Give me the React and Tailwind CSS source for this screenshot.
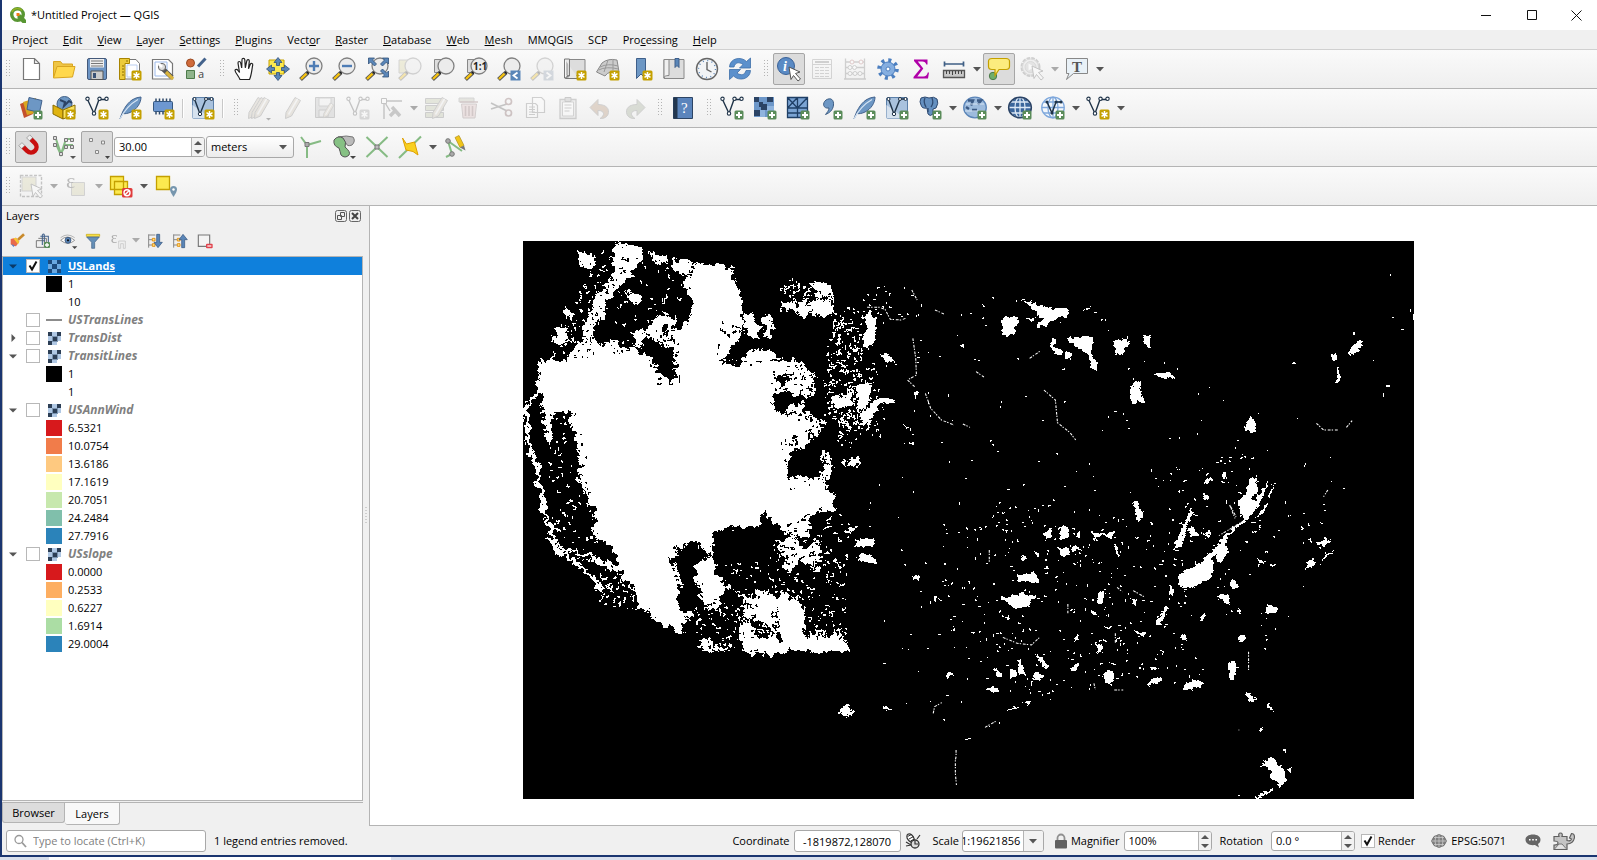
import React from "react";

/* ---------- map raster ---------- */

function makeRandom(seed) {
  let s = seed;
  return () => {
    s = (s * 1664525 + 1013904223) % 4294967296;
    return s / 4294967296;
  };
}

function inside(poly, x, y) {
  let hit = false;
  for (let i = 0, j = poly.length - 1; i < poly.length; j = i++) {
    const [xi, yi] = poly[i];
    const [xj, yj] = poly[j];
    if (yi > y !== yj > y && x < ((xj - xi) * (y - yi)) / (yj - yi) + xi) hit = !hit;
  }
  return hit;
}

/* Short random walks inside a polygon, one square map pixel per step. */
function speckle(seed, text, walks, steps) {
  const poly = text.split(" ").map((p) => p.split(",").map(Number));
  const xs = poly.map((p) => p[0]);
  const ys = poly.map((p) => p[1]);
  const x0 = Math.min(...xs);
  const y0 = Math.min(...ys);
  const w = Math.max(...xs) - x0;
  const h = Math.max(...ys) - y0;
  const rnd = makeRandom(seed);
  let d = "";
  for (let i = 0; i < walks; i++) {
    let x = Math.floor(x0 + rnd() * w);
    let y = Math.floor(y0 + rnd() * h);
    const n = 1 + Math.floor(rnd() * steps);
    for (let k = 0; k < n; k++) {
      if (inside(poly, x, y)) d += `M${x} ${y}h1v1h-1z`;
      if (rnd() < 0.5) x += rnd() < 0.5 ? 1 : -1;
      else y += rnd() < 0.5 ? 1 : -1;
    }
  }
  return d;
}

const WEST_WHITE = [
  "M313 37L400 58L396 90L372 122L350 158L330 165L320 190L295 205L285 235L280 270L255 290L250 320L215 335L228 280L245 235L255 190L285 175L298 150L312 110L308 70z",
  "M215 335L250 322L300 328L345 345L388 358L400 375L430 388L450 430L490 456L497 430L488 380L490 350L500 330L510 295L538 280L550 240L545 210L525 185L522 160L545 130L553 95L600 103L665 113L672 150L690 185L695 240L700 300L690 328L665 350L650 375L660 402L685 405L710 365L750 357L795 365L808 388L850 392L885 405L912 440L918 480L890 505L850 500L845 480L808 485L790 490L792 535L820 548L845 522L872 520L900 560L940 572L945 592L915 625L870 655L840 680L830 745L880 735L905 742L935 740L945 700L935 660L965 680L968 710L958 750L945 775L970 792L977 835L945 845L900 862L897 915L868 930L820 905L760 850L740 892L700 890L660 892L620 905L605 925L607 980L580 970L570 933L530 935L518 965L500 942L493 965L512 985L480 985L500 1020L520 1060L500 1090L510 1140L550 1150L540 1170L515 1185L515 1213L480 1197L420 1160L420 1145L385 1137L380 1095L345 1050L320 1020L270 1000L200 985L245 990L325 1010L320 970L290 940L248 920L255 880L250 840L225 780L205 760L210 720L200 650L190 600L180 570L190 545L130 545L125 590L125 640L110 640L105 600L95 500L90 400L95 385L160 390L175 370L200 345z",
  "M200 62L235 68L255 88L255 105L230 118L212 108z",
  "M140 290L170 288L175 315L150 348L132 335z",
  "M160 245L188 238L185 262L165 262z",
  "M345 330L375 305L410 300L430 270L462 248L478 262L500 285L505 320L490 350L430 348L410 350L380 345z",
  "M345 185L390 200L388 222L365 215z",
  "M420 70L480 78L470 100L430 95z",
  "M485 88L550 92L540 135L500 130L487 112z",
  "M500 205L520 200L518 218z",
  "M700 262L725 255L750 300L742 330L705 300z",
  "M750 258L785 262L790 295L775 330L760 325L765 290z",
  "M815 210L850 218L880 230L930 205L965 215L975 250L940 262L900 245L880 268L850 235L815 232z",
  "M900 160L962 163L962 200L925 200z",
  "M820 395L870 398L875 420L835 425z",
  "M965 500L1000 500L1020 475L1030 520L1000 535L965 532z",
  "M1042 465L1080 460L1080 520L1050 540L1080 560L1078 580L1055 560L1042 520z",
  "M1065 250L1085 245L1085 345L1058 345L1070 300z",
  "M990 690L1012 692L1010 708z",
  "M1022 685L1050 685L1048 710L1020 708z",
  "M560 1000L610 978L622 1040L680 1085L728 1102L738 1078L770 1090L800 1104L830 1090L878 1130L885 1170L880 1225L920 1200L965 1195L990 1190L1008 1240L1025 1268L860 1262L740 1275L700 1262L690 1220L700 1160L700 1100L640 1078L632 1130L600 1140L570 1100L555 1050z",
  "M790 930L850 925L890 960L930 930L925 1030L900 1010L870 985L830 1030L820 980z",
  "M1005 900L1040 890L1015 915z",
  "M1030 925L1082 935L1082 952L1050 950z",
  "M1045 970L1082 975L1082 990L1048 992z",
  "M1008 1416L1028 1442L1012 1464L990 1450L978 1445L1000 1438z",
  "M570 1240L600 1230L660 1260L620 1268L580 1262z",
];

const WEST_BLACK = [
  "M390 325L430 330L470 345L486 390L480 435L452 430L440 390L405 370z",
  "M455 285L482 290L470 315L455 305z",
  "M350 318L375 315L375 335L355 335z",
  "M250 282L300 290L325 325L270 345L255 320z",
  "M655 400L650 370L690 335L700 375L672 400z",
  "M805 440L830 435L830 465L810 470z",
  "M840 690L875 665L890 640L905 670L890 700L845 705z",
  "M640 1080L665 1078L698 1100L698 1160L670 1165L635 1150z",
  "M720 1165L750 1170L790 1210L780 1230L740 1220z",
  "M798 1110L804 1180L815 1235L802 1235L795 1180z",
  "M885 1165L940 1130L1000 1190L960 1215L890 1190z",
  "M525 1000L540 1010L580 1120L600 1170L560 1160L530 1090z",
  "M270 1080L300 1040L340 1050L380 1110L380 1135L280 1120z",
];

const COAST =
  "M85 440L95 485L62 510L45 540L55 590L50 630L68 680L85 722L85 770L102 800L98 840L118 880L130 930L134 960L190 990L240 1035L275 1075L276 1120";

const EAST_TOP = [
  "M455 207L470 210L495 225L545 238L555 232L583 236L578 258L530 275L525 292L498 292L500 278L515 262L495 258L485 240z",
  "M462 264L490 262L482 276z",
  "M398 260L435 258L447 272L435 292L430 314L398 314z",
  "M616 246L645 226L640 236z",
  "M580 326L610 320L650 317L650 365L665 418L652 420L634 370L600 345z",
  "M532 350L540 325L547 330L542 350L568 360L562 377L545 372z",
  "M577 370L593 370L592 386L578 386z",
  "M562 424L578 408L578 420z",
  "M710 335L738 328L755 312L742 335L760 338L742 350L735 375L718 374z",
  "M793 316L815 318L812 340L818 355L803 354L797 336z",
  "M820 432L855 428L865 420L884 445L850 445z",
  "M768 460L792 457L785 480L797 515L778 515L762 524L755 478z",
  "M1078 602L1080 578L1098 560L1110 580L1108 604z",
  "M1370 376L1372 350L1395 335L1413 332L1395 365z",
  "M1320 368L1332 372L1335 397L1325 390z",
  "M1336 412L1346 440L1344 458L1333 458z",
  "M1205 405L1218 390L1220 400z",
  "M282 345L292 342L292 356z",
  "M150 492L160 482L167 492L156 502z",
  "M58 370L80 373L95 398L68 390z",
  "M10 260L20 250L45 262L45 310L32 345L8 346L22 320L20 280z",
  "M0 465L22 462L24 512L0 520z",
  "M35 520L65 500L102 512L100 518L55 522L38 555L10 587L0 560z",
  "M338 222L348 224L345 230z",
  "M960 762L978 738L990 755z",
  "M1012 728L1028 730L1018 748z",
  "M956 800L966 792L980 805L960 811z",
  "M1058 815L1080 792L1090 745L1112 745L1115 775L1100 800L1108 840L1085 870L1070 865z",
  "M1105 820L1145 745L1130 795L1112 835z",
  "M1140 800L1163 755L1150 800z",
  "M1105 865L1142 818L1130 850z",
  "M765 815L776 812L792 865L778 870z",
  "M918 860L930 832L934 848z",
  "M1242 708L1252 697L1248 708z",
  "M115 580L145 600L130 596z",
  "M140 634L152 638L142 645z",
];

const EAST_BOTTOM = [
  "M1058 0L1110 0L1105 40L1075 70L1040 95L1028 120L1025 140L1034 158L1010 185L995 182L1005 160L985 175L990 200L978 238L930 262L905 268L890 250L895 220L918 205L945 195L975 165L1000 140L1010 115L1060 70L1085 45L1075 15z",
  "M880 150L888 110L910 70L927 20L934 38L915 80L903 135z",
  "M918 85L930 80L950 100L945 112L925 112z",
  "M963 105L990 80L975 108z",
  "M1110 50L1145 8L1130 38z",
  "M768 4L776 4L790 40L780 68z",
  "M512 100L535 84L538 102L522 122z",
  "M563 80L580 82L585 112L560 118z",
  "M555 145L580 140L588 165L572 176z",
  "M592 140L605 136L618 150L598 152z",
  "M596 105L612 110L618 96z",
  "M648 88L660 100L690 98L715 92L705 118L685 105L655 122z",
  "M712 132L722 140L728 180L720 170z",
  "M0 115L38 114L40 138L5 136z",
  "M0 160L22 170L46 178L44 188L0 184z",
  "M147 228L165 226L170 236L158 243z",
  "M205 290L228 298L208 304z",
  "M432 228L470 222L488 215L500 245L445 244z",
  "M392 290L440 285L455 275L470 285L498 285L480 298L475 320L425 320L410 305z",
  "M447 168L465 165L468 178L450 180z",
  "M482 152L502 160L500 172z",
  "M512 205L522 198L530 212z",
  "M400 350L420 352L412 362z",
  "M665 308L668 282L685 268L680 308z",
  "M642 325L665 345L650 346z",
  "M756 298L778 296L775 323z",
  "M830 374L850 325L862 322L855 345L842 374z",
  "M1140 312L1172 328L1150 345L1135 335z",
  "M1005 285L1030 283L1035 314L1018 310z",
  "M1036 250L1045 238L1060 255L1048 266z",
  "M1050 332L1064 328L1064 342z",
  "M1112 172L1130 190L1116 192z",
  "M1148 190L1170 192L1158 202z",
  "M1252 184L1270 176L1280 188L1265 202L1245 212z",
  "M1275 128L1300 122L1305 108L1315 125L1300 142z",
  "M1290 176L1330 145L1300 178z",
  "M1056 410L1083 408L1078 424L1060 422z",
  "M896 412L908 402L916 412L905 422z",
  "M763 388L798 400L795 412z",
  "M658 432L672 428L685 450L668 460z",
  "M598 412L615 402L608 428z",
  "M488 462L508 470L528 500L518 506z",
  "M440 480L450 478L462 526L445 525z",
  "M375 505L398 520L395 536L380 530z",
  "M420 512L432 508L442 532L422 536z",
  "M484 540L492 510L520 530L500 540z",
  "M584 515L610 482L615 490L600 516z",
  "M680 525L700 512L712 520L705 555L690 548z",
  "M697 488L718 490L712 500z",
  "M805 558L815 538L848 528L850 540L825 550z",
  "M815 502L836 500L820 514z",
  "M905 570L910 550L938 538L965 552L940 565z",
  "M1033 490L1054 484L1050 536L1033 536z",
  "M354 572L368 557L390 565L388 580z",
  "M244 530L250 512L265 528z",
  "M1078 575L1092 580L1108 602L1088 606z",
  "M1137 606L1155 625L1152 636z",
  "M1120 688L1132 684L1126 696z",
  "M1182 742L1194 750L1190 762z",
  "M1126 796L1135 778L1160 773L1168 795L1185 802L1196 835L1176 860L1152 836L1150 812z",
  "M1198 812L1205 800L1210 822z",
  "M1105 890L1130 880L1158 864L1155 874L1112 897z",
  "M1062 890L1072 884L1066 896z",
  "M410 630L445 618L430 630z",
  "M450 608L480 604L475 612z",
  "M290 716L318 712L300 722z",
  "M253 388L268 380L265 390z",
  "M60 618L90 630L72 632z",
  "M950 352L970 340L958 362z",
  "M685 375L705 380L690 385z",
  "M866 285L870 250L880 270L875 288z",
  "M808 62L820 62L820 72z",
];

const THIN_TOP =
  "M20 232h35l15 6l15 30l30 2l15 -6M148 325l8 60l2 50l-25 15l20 20M183 490l15 45l30 35l35 15M288 582l20 10M515 480l32 30l6 68l35 30l16 22M325 425l22 16M1035 825l15 40M1278 580l20 20l40 0M1310 780l-12 20M1362 592l16 -20M475 385l30 -22M145 180l15 30M210 240l25 12";
const THIN_BOTTOM =
  "M269 750v20l-2 10v40l3 35M400 412l40 18l40 5l25 -25M720 262l15 14M765 272l30 18M1088 455v60M582 312v30M205 640l4 -20l20 -12M362 150v35M655 550l4 20M712 570h25M715 400v30M1060 690h2M350 682l30 -18M1075 62l-70 45M1038 20l15 30";

function RasterMap() {
  const landEast =
    "865,290 960,290 1080,300 1230,400 1330,420 1350,500 1310,600 1250,690 1120,700 1020,700 960,770 940,720 880,690 850,600 840,400";
  const whites = [
    speckle(11, "856,296 870,330 885,420 850,440 815,420 820,390 835,350 830,320", 240, 9),
    speckle(12, "830,310 862,335 862,425 835,430 822,390", 210, 8),
    speckle(13, "590,250 675,250 680,320 600,340 560,330", 90, 10),
    speckle(14, "780,275 832,285 835,310 780,312", 110, 9),
    speckle(15, "770,535 850,510 845,600 770,600", 190, 9),
    speckle(27, "690,605 845,605 850,651 700,651", 230, 9),
    speckle(28, "725,565 770,555 775,600 740,598", 50, 8),
    speckle(16, "545,415 575,415 595,510 600,560 552,530", 130, 9),
    speckle(17, "565,300 600,270 585,355 548,360", 120, 9),
    speckle(19, landEast, 330, 3),
    speckle(20, "960,510 1060,495 1180,550 1200,680 1030,700 960,680 940,570", 330, 4),
    speckle(21, "1160,470 1270,440 1270,560 1200,600 1150,560", 100, 5),
    speckle(22, "1300,510 1335,530 1320,565 1300,540", 28, 5),
    speckle(23, "825,410 870,415 885,440 840,450", 50, 8),
    speckle(25, "600,560 640,580 640,610 600,605", 90, 8),
    speckle(26, "865,285 940,288 935,320 870,320", 24, 4),
  ];
  const blacks = [
    speckle(31, "780,440 832,420 835,480 790,490", 130, 10),
    speckle(32, "640,330 680,330 680,385 655,385", 90, 10),
    speckle(33, "770,355 815,360 822,430 770,410", 120, 10),
    speckle(34, "695,600 760,595 760,652 700,652", 110, 9),
    speckle(42, "800,590 845,590 850,640 805,640", 130, 9),
    speckle(35, "670,560 700,540 705,640 690,640", 100, 10),
    speckle(36, "720,320 775,340 770,370 715,370", 70, 10),
    speckle(37, "775,530 835,500 840,590 770,590", 200, 9),
    speckle(38, "545,345 615,320 640,350 560,362", 80, 8),
    speckle(39, "600,240 700,258 690,290 610,280", 80, 9),
    speckle(40, "565,430 582,430 598,530 575,520", 60, 6),
    speckle(41, "590,260 610,260 625,350 590,345", 90, 8),
  ];
  return (
    <svg
      viewBox="523 241 891 558"
      className="block h-[558px] w-[891px] shrink-0 bg-black"
      role="img"
      aria-label="USLands raster"
      shapeRendering="crispEdges"
    >
      <defs>
        <filter id="ragged" x="0" y="0" width="100%" height="100%" colorInterpolationFilters="sRGB">
          <feTurbulence type="fractalNoise" baseFrequency="0.16" numOctaves="4" seed="7" />
          <feDisplacementMap in="SourceGraphic" scale="13" xChannelSelector="R" yChannelSelector="G" result="moved" />
          <feComponentTransfer in="moved">
            <feFuncR type="discrete" tableValues="0 1" />
            <feFuncG type="discrete" tableValues="0 1" />
            <feFuncB type="discrete" tableValues="0 1" />
          </feComponentTransfer>
        </filter>
        <filter id="jagged" x="0" y="0" width="100%" height="100%" colorInterpolationFilters="sRGB">
          <feTurbulence type="fractalNoise" baseFrequency="0.2" numOctaves="3" seed="3" />
          <feDisplacementMap in="SourceGraphic" scale="6" xChannelSelector="R" yChannelSelector="G" />
        </filter>
      </defs>
      <rect x="523" y="241" width="891" height="558" fill="#000" />
      <g filter="url(#ragged)">
        <rect x="523" y="241" width="891" height="558" fill="#000" />
        <g transform="translate(510 230) scale(.33333)">
          <path d={WEST_WHITE.join("")} fill="#fff" />
          <path d={COAST} fill="none" stroke="#fff" strokeWidth="13" />
          <path d="M140 950L200 968L260 985L330 1020L380 1080" fill="none" stroke="#fff" strokeWidth="10" />
          <path d={WEST_BLACK.join("")} fill="#000" />
        </g>
      </g>
      <g filter="url(#jagged)">
        <g fill="#fff" transform="translate(860 230) scale(.35714 .33333)">
          <path d={EAST_TOP.join("")} />
        </g>
        <g fill="#fff" transform="translate(860 500) scale(.35714 .33333)">
          <path d={EAST_BOTTOM.join("")} />
        </g>
      </g>
      <g fill="none" stroke="#fff" strokeWidth="3" strokeDasharray="8 3 4 5">
        <path transform="translate(860 230) scale(.35714 .33333)" d={THIN_TOP} />
        <path transform="translate(860 500) scale(.35714 .33333)" d={THIN_BOTTOM} />
      </g>
      <path d={whites.join("")} fill="#fff" />
      <path d={blacks.join("")} fill="#000" />
      <path fill="#fff" d="M1390 274h1v2h-1zM1410 309h1v3h-1zM1413 314h1v6h-1zM1392 317h2v1h-2zM1401 329h3v1h-3zM1353 332h2v3h-2zM1386 385h4v2h-4zM1383 393h1v4h-1zM1373 360h1v1h-1z" />
    </svg>
  );
}

/* ---------- icon parts ---------- */

function Icon({ children, size = "size-6", box = "0 0 24 24" }) {
  return (
    <svg viewBox={box} className={`${size} block shrink-0 overflow-visible`} fill="none" aria-hidden="true">
      {children}
    </svg>
  );
}

const Star = ({ fill = "#c4a000" }) => (
  <g>
    <rect x="13.5" y="13.5" width="10" height="10" rx="1.5" fill={fill} />
    <path d="M18.5 15v7M15.5 16.7l6 3.6M21.500 16.700l-6 3.600" stroke="#fff" strokeWidth="1.500" />
    <circle cx="18.5" cy="18.5" r="1.800" fill="#fff" />
  </g>
);
const Plus = () => (
  <g>
    <rect x="14.500" y="14.500" width="9" height="9" rx="1.500" fill="#5a8c5a" />
    <path d="M19 16v6M16 19h6" stroke="#fff" strokeWidth="2" />
  </g>
);
const Nodes = ({ c = "#1f3348" }) => (
  <g stroke={c} strokeWidth="1.400">
    <path d="M2.500 3.500l6.500 14l5 -14h7" />
    <g fill="#fff" strokeWidth="1.100">
      <circle cx="2.500" cy="2.800" r="1.700" />
      <circle cx="9" cy="17.500" r="1.700" />
      <circle cx="14.500" cy="2.800" r="1.700" />
      <circle cx="21.500" cy="2.800" r="1.700" />
    </g>
  </g>
);
const Lens = ({ children }) => (
  <g>
    <path d="M9 15.500L1.500 22.500" stroke="#555" strokeWidth="4" />
    <path d="M7.500 16.700L2 22" stroke="#f5c211" strokeWidth="2.400" />
    <path d="M8.500 16l2.500 -2.500" stroke="#111" strokeWidth="2.500" />
    <circle cx="15" cy="9" r="8" fill="#ececec" stroke="#808080" strokeWidth="1.300" />
    {children}
  </g>
);
const Faded = ({ children }) => <g opacity=".3">{children}</g>;
const Quill = () => (
  <g>
    <path d="M2 23C4 16 8 8 14 4c4 -2.500 6 -2.500 9 -3c0 6 -4 12 -10 15c-3 1.500 -6 2 -8 1.500z" fill="#6d97c4" stroke="#41618c" />
    <path d="M2 23C6 15 12 8 20 3.500" stroke="#d5e4f4" strokeWidth="1.200" />
  </g>
);
const Page = () => <path d="M4.500 1.500h11l5 5v16h-16zM15.500 1.500v5h5" fill="#fff" stroke="#777" strokeWidth="1.200" />;
const Globe = ({ c, bg }) => (
  <g stroke={c} strokeWidth="1.300">
    <ellipse cx="12" cy="11.500" rx="11.300" ry="10.300" fill={bg} />
    <ellipse cx="12" cy="11.500" rx="5" ry="10.300" />
    <path d="M1 11.500h22M3 6h18M3 17h18M12 1v21" />
  </g>
);
const Pencil = ({ x = 0 }) => (
  <g transform={`translate(${x} 0)`}>
    <path d="M13 1.500l5.500 3L9.500 20L3.500 22.500L4 16.500z" fill="#c9bfae" stroke="#777" />
    <path d="M15.500 3L6.500 18.500" stroke="#eee" strokeWidth="1.500" />
  </g>
);
const Checker = () => (
  <g shapeRendering="crispEdges">
    <path d="M1 1h20v20h-20z" fill="#6d97c9" />
    <path d="M1 1h5v5h-5zM14 1h6v5h-6zM6 6h4v5h-4zM8 8h6v6h-6zM1 14h6v6h-6z" fill="#2b4365" />
    <path d="M14 10h7v5h-7zM7 14h5v7h-5z" fill="#8fb4de" />
  </g>
);
const Meshed = () => (
  <path d="M1.500 1.500h20v20h-20zM1.500 12h20M11.500 1.500v20M1.500 1.500l10 10.500M11.500 1.500l-10 10.500M21.500 1.500l-10 10.500M1.500 17h20" fill="#7ba4d4" stroke="#1f3f66" strokeWidth="1.300" />
);
const VSquare = () => (
  <g>
    <rect x="1.500" y="1.500" width="21" height="21" rx="1.500" fill="#a9c2de" stroke="#5b7fa8" />
    <path d="M1.500 22.500V9L20 22.500z" fill="#d6e2ef" />
    <path d="M3.500 3l5.500 15l6 -15h6" stroke="#1f3348" strokeWidth="1.400" />
    <g fill="#fff" stroke="#1f3348"><circle cx="3.500" cy="3" r="1.500" /><circle cx="9" cy="18" r="1.700" /><circle cx="15" cy="3" r="1.500" /><circle cx="20.500" cy="3" r="1.500" /></g>
  </g>
);
const Pointer = ({ x = 0, y = 0 }) => (
  <path transform={`translate(${x} ${y})`} d="M11 9l11 5l-4.500 1.500l5 5.500l-2.500 2l-4.500 -5.500l-2.500 4z" fill="#fff" stroke="#555" />
);

const I = {
  new: <Page />,
  open: (
    <g stroke="#d9a520">
      <path d="M1.500 20.500V4.500h7l2 2.500h10v4" fill="#eec545" />
      <path d="M1.500 21L5 9.500h18L20.500 20z" fill="#ffd84d" />
    </g>
  ),
  save: (
    <g>
      <path d="M2.500 3q0 -1.500 1.500 -1.500h16q1.500 0 1.500 1.500v18q0 1.500 -1.500 1.500h-16q-1.500 0 -1.500 -1.500z" fill="#6c94c4" stroke="#44597a" />
      <path d="M5 2h14v8.500h-14z" fill="#eee" />
      <path d="M6 4h12M6 6.500h12M6 9h12" stroke="#777" />
      <path d="M6 14h12v8.500h-12z" fill="#ccc" stroke="#555" /><path d="M8 16h3v5h-3z" fill="#3b5376" />
    </g>
  ),
  layout: (
    <g>
      <path d="M2 2.500h16l3.500 4v15.500h-19.500z" fill="#fff" stroke="#777" />
      <path d="M9 8h10v12h-10z" stroke="#b9cdf0" />
      <path d="M1.500 1.500h10v5h-4.500v16h-5.500z" fill="#eccb3a" stroke="#a88400" />
      <path d="M4 9h2M4 12h2M4 15h2M4 18h2M9 3v2" stroke="#8a6d00" />
      <Star />
    </g>
  ),
  layoutManager: (
    <g>
      <path d="M1.500 2.500h16l4 4v15.500h-20z" fill="#fff" stroke="#777" strokeWidth="1.200" />
      <path d="M4 5h12v14h-12z" stroke="#9cb9ea" />
      <path d="M12 12l9 8.500" stroke="#555" strokeWidth="4.500" /><path d="M15 15l7 7" stroke="#d9b43c" strokeWidth="3.200" />
      <circle cx="11" cy="10" r="3.600" fill="#ddd" stroke="#666" /><path d="M8 7l3 3" stroke="#fff" strokeWidth="2.500" />
    </g>
  ),
  style: (
    <g>
      <circle cx="6.500" cy="6" r="4" fill="#d06a3a" stroke="#9a4a22" />
      <path d="M14 9.500l7.500 -8" stroke="#44638c" strokeWidth="3" />
      <path d="M2.500 13.500h8v8h-8z" fill="#8fb48b" stroke="#4d7a4a" />
      <text x="14" y="21" fontSize="11" fill="#444" fontFamily="Open Sans">a</text>
    </g>
  ),
  hand: (
    <path d="M7 22.500c-1 -3 -4.500 -6.500 -5 -9c0 -1.500 2.200 -1.500 3 0l1.500 2L5 6c0 -2 2.300 -2 2.700 0l1 5L9 2.800c0 -2 2.700 -2 2.800 0l.5 8l1.500 -7c.5 -1.800 2.700 -1.300 2.500 .5l-.8 7.500l1.800 -4.500c.8 -1.500 2.800 -.8 2.400 .9c-1 5 -1.200 10 -3.200 14.300z" fill="#fff" stroke="#222" strokeWidth="1.200" />
  ),
  panSel: (
    <g>
      <path d="M3 3h15v14h-15z" fill="#fce94f" stroke="#c4a000" />
      <path d="M12 .5l4 5h-2.500v3h-3v-3h-2.500zM23.500 12l-5 4v-2.500h-3v-3h3v-2.500zM12 23.500l-4 -5h2.500v-3h3v3h2.500zM.5 12l5 -4v2.500h3v3h-3v2.500z" fill="#5a86b8" stroke="#30507a" strokeWidth=".8" />
    </g>
  ),
  zoomIn: <Lens><path d="M15 4v10M10 9h10" stroke="#4f7db5" strokeWidth="2.400" /></Lens>,
  zoomOut: <Lens><path d="M10 9h10" stroke="#4f7db5" strokeWidth="2.400" /></Lens>,
  zoomFull: (
    <Lens>
      <path d="M3.500 1h6l-2 2l4 4l-2 2l-4 -4l-2 2zM23.500 1h-6l2 2l-4 4l2 2l4 -4l2 2zM23.500 20h-6l2 -2l-4 -4l2 -2l4 4l2 -2z" fill="#5a86b8" stroke="#30507a" strokeWidth=".8" />
    </Lens>
  ),
  zoomSel: <Faded><path d="M1 3h12v13h-12z" fill="#d8d39a" stroke="#888" /><Lens /></Faded>,
  zoomLayer: <g><path d="M3.500 2.500h9v13h-9z" fill="#ddd" stroke="#888" /><Lens /></g>,
  zoomNative: (
    <g><path d="M3.500 2.500h9v13h-9z" fill="#ddd" stroke="#888" /><Lens><text x="9" y="13" fontSize="10" fontWeight="700" fill="#222" fontFamily="Open Sans">1:1</text></Lens></g>
  ),
  zoomLast: <Lens><path d="M13.500 13.500h10v10h-10z" fill="#5a86b8" /><path d="M20.500 15.500l-4 3l4 3" stroke="#fff" strokeWidth="1.800" /></Lens>,
  zoomNext: <Faded><Lens><path d="M13.500 13.500h10v10h-10z" fill="#8a9aac" /><path d="M16.500 15.500l4 3l-4 3" stroke="#fff" strokeWidth="1.800" /></Lens></Faded>,
  mapView: <g><path d="M4 2.500h18v16h-18z" fill="#ddd" stroke="#888" /><path d="M1.500 2h5v17q-4 0 -4 2.500h13" fill="#e8e8e8" stroke="#777" /><path d="M1.500 2v19h4" stroke="#777" /><Star /></g>,
  map3d: <g><path d="M6 6q6 -5 15 -3l2 12q-10 -2 -14 4L.500 15z" fill="#ccc" stroke="#888" /><path d="M4 10q8 -4 18 -1M2.500 13q8 -4 20 -1M12 3l-4 12M17 2.500v11" stroke="#999" /><Star /></g>,
  bookmark: <g><path d="M7.500 1.500h9v20l-4.500 -4.500l-4.500 4.500z" fill="#6d97c4" stroke="#3e5f8a" /><Star /></g>,
  bookmarks: <g><path d="M2 2.500h20v19h-20z" fill="#ddd" stroke="#888" /><path d="M2 2.500h5v16q-5 0 -5 2.500z" fill="#f0f0f0" stroke="#888" /><path d="M13 1.500h4v9l-2 -2l-2 2z" fill="#5a86b8" stroke="#3e5f8a" /></g>,
  clock: (
    <g><circle cx="12" cy="12" r="10.500" fill="#f2f4f6" stroke="#666" strokeWidth="1.400" /><circle cx="12" cy="12" r="8.500" stroke="#5a86b8" strokeDasharray="1 3.450" strokeWidth="1.400" /><path d="M12 5v7.500l4.500 2.500" stroke="#666" strokeWidth="1.400" /></g>
  ),
  refresh: (
    <g fill="#5b90cc" stroke="#3e6fa8" strokeWidth=".8">
      <path d="M1.500 10C2 1 13 -1 18.500 4.500L22.500 1v10h-11l3.500 -3.500C11 4.500 7 5.500 6 10z" />
      <path d="M22.500 13.500C22 22.500 11 24.500 5.500 19L1.500 22.500v-10h11L9 16C13 19 17 18 18 13.500z" />
    </g>
  ),
  identify: <g><circle cx="9" cy="9" r="8.500" fill="#5a8ac4" stroke="#3a6298" /><text x="6" y="14" fontSize="14" fontStyle="italic" fontWeight="700" fill="#fff" fontFamily="Liberation Serif">i</text><Pointer x={1} y={1} /></g>,
  table: <Faded><path d="M2.500 2.500h19v19h-19zM2.500 7.500h19" stroke="#888" /><path d="M5 5h14" stroke="#777" strokeWidth="2" /><path d="M5 10.500h14M5 13.500h14M5 16.500h14M5 19.500h14" stroke="#888" strokeDasharray="4 1" /></Faded>,
  abacus: <Faded><path d="M2.500 1.500v20M21.500 1.500v20M1 22h22M2.500 5h19M2.500 10.500h19M2.500 16.500h19" stroke="#777" strokeWidth="1.300" /><g fill="#fff" stroke="#a66"><circle cx="9" cy="5" r="2" /><circle cx="18" cy="5" r="2" /></g><g fill="#fff" stroke="#777"><circle cx="7" cy="10.500" r="2" /><circle cx="11.500" cy="10.500" r="2" /><circle cx="7" cy="16.500" r="2" /><circle cx="12" cy="16.500" r="2" /><circle cx="17" cy="16.500" r="2" /></g></Faded>,
  gear: <g><circle cx="12" cy="12" r="8.800" stroke="#4c7fc0" strokeWidth="4" strokeDasharray="3 3.910" /><circle cx="12" cy="12" r="7" fill="#85aee0" stroke="#4c7fc0" /><circle cx="12" cy="12" r="2" fill="#fff" stroke="#4c7fc0" /></g>,
  sigma: <path d="M5 2.500h13.500v5h-1.200q-.8 -3 -4 -3h-4.500l5.500 7l-6 8h6q3.500 0 4.500 -4h1.200l-1 6h-14.500v-1.500l7 -8.500l-6.500 -7.500z" fill="#b000a8" />,
  measure: <g><path d="M2 7h20M2.500 4.500v5M21.500 4.500v5" stroke="#3f5f85" strokeWidth="1.700" /><path d="M1.500 13.500h21v7h-21z" fill="#c8c8c8" stroke="#555" strokeWidth="1.300" /><path d="M4.500 14v3M7.500 14v3M10.500 14v4M13.500 14v3M16.500 14v3M19.500 14v3" stroke="#444" /></g>,
  mapTips: <g><circle cx="6" cy="19" r="3.700" fill="#6fae6c" stroke="#4d7a4a" /><path d="M5 1.500h14q3.500 0 3.500 3v5q0 3 -3.500 3h-7l-4 6v-6h-3q-3.500 0 -3.500 -3v-5q0 -3 3.500 -3z" fill="#fcec7e" stroke="#c4a000" strokeWidth="1.200" /></g>,
  action: <Faded><circle cx="10.500" cy="10" r="8.500" stroke="#777" strokeWidth="3" strokeDasharray="3.500 1" /><circle cx="10.500" cy="10" r="8" fill="#ddd" stroke="#999" /><circle cx="10.500" cy="10" r="5.500" fill="#bbb" stroke="#999" /><path d="M8.500 6.500l6 3.500l-6 3.500z" fill="#fff" /><Pointer x={1} /></Faded>,
  annotation: <g><path d="M1.500 1.500h21v15h-14l-7 6l2.500 -6h-2.500z" fill="#e9f1f7" stroke="#888" /><text x="7" y="14.500" fontSize="15" fontWeight="700" fill="#555" fontFamily="Liberation Serif">T</text></g>,

  dataSource: <g><path d="M1 8l10 -4l3 14l-9 4z" fill="#c4502c" /><path d="M4 6l13 -4l2 14l-11 3z" fill="#d9a520" /><path d="M10 1.500l13 3l-2.500 12l-12.500 -3z" fill="#6d97c4" stroke="#41618c" /><Plus /></g>,
  geopackage: <g><circle cx="12.500" cy="8" r="7.500" fill="#6d97c4" stroke="#3f5f85" /><path d="M8 4l5 2l-1 4l5 -5l3 2" stroke="#2b4365" strokeWidth="2" /><path d="M1 9l10 5v9l-10 -5z" fill="#e0b410" stroke="#8a6d00" /><path d="M11 14l12 -5v9l-12 5z" fill="#fbe260" stroke="#8a6d00" /><Star /></g>,
  newShp: <g><Nodes /><Star /></g>,
  newQuill: <g><Quill /><Star /></g>,
  chip: <g><path d="M5 2.500v16M8.500 2.500v16M12 2.500v16M15.500 2.500v16M19 2.500v16" stroke="#2e4869" strokeWidth="1.500" /><rect x="2.500" y="5.500" width="19" height="10" rx="1" fill="#6d97d0" stroke="#34567f" /><Star /></g>,
  virtual: <g><VSquare /><Star /></g>,
  editsMulti: <Faded><Pencil x={-2} /><Pencil x={1} /><Pencil x={4} /><path d="M19 22h5l-2.500 2.500z" fill="#222" /></Faded>,
  pencil: <Faded><Pencil x={2} /></Faded>,
  saveEdits: <Faded><path d="M2.500 1.500h19v20h-19z" fill="#bbb" stroke="#777" /><path d="M6 2h12v8h-12z" fill="#eee" stroke="#888" /><path d="M6 14h9v7h-9z" fill="#ddd" stroke="#777" /><g transform="translate(8 6) scale(.7)"><Pencil /></g></Faded>,
  addFeature: <Faded><Nodes c="#555" /><Star fill="#999" /></Faded>,
  vertex: <Faded><path d="M5 23V5h18M5 5l6 10" stroke="#555" strokeWidth="1.400" /><path d="M2.500 2.500h5v5h-5z" fill="#fff" stroke="#555" /><path d="M11 20l6 -6M13 11l8 9" stroke="#666" strokeWidth="3.500" /></Faded>,
  modify: <Faded><path d="M1.500 2.500h18v5h-18zM1.500 9.500h18v5h-18zM1.500 16.500h18v5h-18z" fill="#b9c0a0" stroke="#777" /><Pencil x={5} /></Faded>,
  trash: <Faded><path d="M2 2h15v4h-15z" fill="#bba" stroke="#888" /><path d="M4.500 8h15l-1.500 14h-12z" fill="#d8b8b8" stroke="#877" /><path d="M3 6h18M8.500 10v10M12 10v10M15.500 10v10" stroke="#866" strokeWidth="1.600" /></Faded>,
  cut: <Faded><path d="M1 7l16 8M1 13l16 -5" stroke="#555" strokeWidth="1.800" /><circle cx="18.500" cy="5.500" r="3" stroke="#755" strokeWidth="1.700" /><circle cx="18.500" cy="17" r="3" stroke="#755" strokeWidth="1.700" /></Faded>,
  copy: <Faded><path d="M9.500 1.500h9l3 3v12h-12zM3.500 7.500h9l2 2v12h-11z" fill="#fff" stroke="#777" strokeWidth="1.200" /><path d="M6 11h6M6 13.500h6M6 16h6M6 18.500h6" stroke="#777" /></Faded>,
  paste: <Faded><path d="M4 3.500h16v19h-16z" fill="#ddd" stroke="#777" strokeWidth="1.300" /><path d="M6.500 6h11v14h-11z" fill="#fff" stroke="#888" /><path d="M9 1.500h6v4h-6z" fill="#aaa" stroke="#666" /><path d="M8.500 9h7M8.500 12h7M8.500 15h5" stroke="#777" /></Faded>,
  undo: <Faded><path d="M9 3.500v5c8 0 12 4 10 10c-2 4 -6 4 -8 4c5 -3 5 -8 -2 -8v5l-8 -8z" fill="#b08a6a" stroke="#777" /></Faded>,
  redo: <Faded><path d="M15 3.500v5c-8 0 -12 4 -10 10c2 4 6 4 8 4c-5 -3 -5 -8 2 -8v5l8 -8z" fill="#9aa58c" stroke="#777" /></Faded>,
  help: <g><path d="M2.500 1.500h19v21h-19z" fill="#5a84bc" stroke="#2c4464" /><path d="M2.500 1.500h4v21h-4z" fill="#22364f" /><text x="10" y="17" fontSize="15" fill="#fff" fontFamily="Liberation Serif">?</text></g>,
  addVector: <g><Nodes /><Plus /></g>,
  addRaster: <g><Checker /><Plus /></g>,
  addMesh: <g><Meshed /><Plus /></g>,
  addCsv: <g><path d="M7 4c5 -3 8 0 7.500 5c-.5 5 -4 8 -8 9.500c1.500 -2 3.500 -4 3.500 -6.500c-6 1 -7 -5 -3 -8z" fill="#6d97c4" stroke="#3f5f85" /><Plus /></g>,
  addQuill: <g><Quill /><Plus /></g>,
  addVirtual: <g><VSquare /><Plus /></g>,
  addPg: <g><path d="M3 2q4 -2 8 0q5 -2 8 1q2 4 -1 9l-3 1v5q-3 3 -5 0l-1 -6q-5 1 -6 -3q-2 -3 0 -7z" fill="#6590c0" stroke="#2f4a70" /><path d="M7 2q-2 4 1 9M14 2q2 5 -1 9M10 12v4" stroke="#2f4a70" strokeWidth="1.300" /><Plus /></g>,
  addWms: <g><ellipse cx="12" cy="11.500" rx="11.300" ry="10.300" fill="#9dbbdd" stroke="#5b85b8" strokeWidth="1.300" /><path d="M5 4.500h5l-2 5M14 4.500h4l-3 4M9 14h5M3 11l3 2" stroke="#3b5a85" strokeWidth="2.500" /><path d="M3 8h18M2 15h20" stroke="#d5e4f4" /><Plus /></g>,
  addWcs: <g><Globe c="#dce8f5" bg="#3b669c" /><ellipse cx="12" cy="11.500" rx="11.300" ry="10.300" stroke="#2b4365" strokeWidth="1.600" /><Plus /></g>,
  addWfs: <g><Globe c="#7fa8dc" bg="#f4f8fc" /><path d="M6 6l5 11l4 -11h5" stroke="#1f3348" strokeWidth="1.500" /><g fill="#1f3348"><circle cx="6" cy="6" r="1.500" /><circle cx="11" cy="17" r="1.500" /><circle cx="15" cy="6" r="1.500" /><circle cx="20" cy="6" r="1.500" /></g><Plus /></g>,

  magnet: <g transform="rotate(-45 12 12)"><path d="M6.500 6v6a5.500 5.500 0 0 0 11 0v-6" stroke="#c80f0f" strokeWidth="4.500" /><path d="M4.300 2.500h4.400v4h-4.400zM15.300 2.500h4.400v4h-4.400z" fill="#eee" stroke="#999" strokeWidth=".8" /></g>,
  snapAdv: <g><path d="M4 4l5 15l5 -15h7M4 9l5 11M9 18l5 -8h7" stroke="#86bb84" strokeWidth="2" /><g fill="#ddd" stroke="#777"><path d="M1.500 1.500h3v3h-3zM12.500 3.500h3v3h-3zM18.500 3.500h3v3h-3zM1.500 8.500h3v3h-3zM12.500 10.500h3v3h-3zM18.500 10.500h3v3h-3zM7.500 17.500h3v3h-3z" /></g><path d="M18 21h6l-3 3z" fill="#555" /></g>,
  snapType: <g><path d="M4.500 3.500h3v3h-3zM16.500 6h3v3h-3zM10.500 15.500h3v3h-3z" fill="#eee" stroke="#888" /><path d="M20 21h5l-2.500 3z" fill="#444" /></g>,
  topo: <g><path d="M2 2l6 8l14 -4M8 10v13" stroke="#86bb84" strokeWidth="2" /><path d="M6 7.500h4v4h-4z" fill="#aaa" stroke="#777" /></g>,
  overlap: <g><path d="M6 2q9 -2 15 0q3 4 -1 8q-5 2 -6 -2z" fill="#bbb" stroke="#777" /><path d="M2 5q4 -5 9 -2q4 4 2 9q6 5 4 8q-4 4 -8 0q-1 -4 -2 -7q-6 -2 -5 -8z" fill="#86c184" stroke="#555" /><path d="M18 21h6l-3 3z" fill="#444" /></g>,
  cross: <g><path d="M1.500 2l21 20M22.500 2l-21 20" stroke="#86bb84" strokeWidth="2" /><path d="M10 10h4v4h-4z" fill="#bbb" stroke="#777" /></g>,
  trace: <g><path d="M23 1.500L1 23" stroke="#86bb84" strokeWidth="2" /><path d="M4.500 3l4 6l8 -2l3.500 13l-5 -3.500l-7 -1.500z" fill="#f8d020" stroke="#e0a000" /></g>,
  selfSnap: <g><path d="M3 22l6 -3L5 6l14 10" stroke="#86bb84" strokeWidth="2" /><circle cx="5" cy="6" r="2.300" fill="#aaa" stroke="#777" /><circle cx="9" cy="19" r="2.300" fill="#aaa" stroke="#777" /><path d="M12 2.500l4 -2l5 10l-4 2z" fill="#f0c419" stroke="#b09020" strokeWidth=".7" /><path d="M17 12.500l4 -2l1.500 5z" fill="#777" /></g>,

  select: <Faded><path d="M1.500 1.500h21v21h-21z" stroke="#555" strokeDasharray="3 1.500" strokeWidth="1.400" /><path d="M3 3h14v14h-14z" fill="#d0cca0" stroke="#888" /><Pointer x={1} y={1} /></Faded>,
  selectExpr: <Faded><path d="M7.500 8.500h13v13h-13z" fill="#d0cca0" stroke="#888" /><text x="2" y="14" fontSize="22" fill="#333" fontFamily="Liberation Serif">ε</text></Faded>,
  deselect: <g><path d="M1.500 2.500h13v13h-13zM5.500 7.500h13v13h-13z" fill="#fce94f" stroke="#c4a000" strokeWidth="1.300" /><rect x="13" y="14" width="10.500" height="9.500" rx="1.500" fill="#e03c3c" /><circle cx="18" cy="18.700" r="3" stroke="#fff" strokeWidth="1.400" /><path d="M16 20.700l4 -4" stroke="#fff" strokeWidth="1.400" /></g>,
  selectLoc: <g><path d="M2.500 2.500h13v13h-13z" fill="#fce94f" stroke="#c4a000" strokeWidth="1.300" /><path d="M19.500 12q3.500 0 3.500 3.500q0 2 -3.500 7.500q-3.500 -5.500 -3.500 -7.500q0 -3.500 3.500 -3.500z" fill="#7696ae" /><circle cx="19.500" cy="15.500" r="1.200" fill="#fff" /></g>,

  brush: <g><path d="M1 9l8 -2l5 6l-5 7q-6 0 -8 -3z" fill="#e86a4c" /><path d="M5 8l4 -1l5 6l-2 4z" fill="#f6c732" /><path d="M2 16l5 3l-2 2z" fill="#4f7fd0" /><path d="M12 10l9 -8" stroke="#c98a2c" strokeWidth="4" /></g>,
  group: <g><path d="M2 11.500h12v10h-12zM5 8v-0h12v10" stroke="#666" strokeWidth="1.300" /><path d="M8 5h12v11M11 18v-15q2 -3 3 0v10" stroke="#44638c" strokeWidth="1.600" /><g transform="translate(-1 -1)"><Plus /></g></g>,
  eye: <g><path d="M1 11q10 -10 21 0q-10 9 -21 0z" fill="#fff" stroke="#888" strokeWidth="1.300" /><circle cx="12" cy="11" r="4.500" fill="#5a86b8" stroke="#2b4365" /><circle cx="12" cy="11" r="1.700" fill="#111" /><path d="M1 7q10 -8 21 0" stroke="#999" /><path d="M18 20h8l-4 4z" fill="#444" /></g>,
  filter: <g><path d="M2 2h20v3h-20z" fill="#fce94f" stroke="#c4a000" /><path d="M2.500 6h19l-7 8v9h-4.500v-9z" fill="#6590b8" stroke="#3f5f85" /></g>,
  exprFilter: <g opacity=".4"><text x="1" y="15" fontSize="24" fill="#444" fontFamily="Liberation Serif">ε</text><path d="M13 12h10v11h-3v-7h-4v7h-3z" stroke="#777" /></g>,
  expand: <g><path d="M2.500 2v20M2.500 3h10M2.500 10h5M2.500 18h5" stroke="#888" strokeWidth="1.500" /><path d="M8 8h4v4h-4zM8 16h4v4h-4z" fill="#ffe08a" stroke="#e08a00" strokeWidth="1.300" /><path d="M14.500 2h4.500v12h4l-6.500 8l-6 -8h4z" fill="#5a86b8" stroke="#30507a" /></g>,
  collapse: <g><path d="M2.500 2v20M2.500 3h10M2.500 10h5M2.500 18h5" stroke="#888" strokeWidth="1.500" /><path d="M8 8h4v4h-4zM8 16h4v4h-4z" fill="#ffe08a" stroke="#e08a00" strokeWidth="1.300" /><path d="M14.500 22h4.500v-12h4l-6.500 -8l-6 8h4z" fill="#5a86b8" stroke="#30507a" /></g>,
  remove: <g><path d="M2 3h17v17h-17z" fill="#f4f4f4" stroke="#777" strokeWidth="1.700" /><rect x="13.500" y="16" width="10" height="7" rx="1.500" fill="#e0434d" /><path d="M15.500 19.500h6" stroke="#fff" strokeWidth="1.800" /></g>,
};

/* ---------- toolbar widgets ---------- */

function Tool({ name, label, on }) {
  return (
    <button
      type="button"
      aria-label={label || name}
      className={
        on
          ? "flex size-8 shrink-0 items-center justify-center rounded-[2px] border border-[#a6a6a6] bg-[#dcdcdc]"
          : "flex size-8 shrink-0 items-center justify-center"
      }
    >
      <Icon>{I[name]}</Icon>
    </button>
  );
}

function Arrow({ dim }) {
  return (
    <button type="button" aria-label="More options" className="flex h-8 w-[11px] shrink-0 items-center justify-center">
      <svg viewBox="0 0 8 5" className="h-[5px] w-2" aria-hidden="true">
        <path d="M0 0h8l-4 4.500z" fill={dim ? "#aaa" : "#555"} />
      </svg>
    </button>
  );
}

function Grip({ first }) {
  return (
    <div className={first ? "flex w-3 shrink-0 justify-end pr-1" : "flex w-[15px] shrink-0 justify-end pr-1"}>
      <svg viewBox="0 0 4 18" className="h-[18px] w-1" aria-hidden="true" shapeRendering="crispEdges">
        <path d="M0 0v18M3 0v18" transform="translate(.5 0)" stroke="#b4b4b4" strokeDasharray="1 2" />
      </svg>
    </div>
  );
}

const Sep = () => <div className="mx-[2px] h-[19px] w-[2px] shrink-0 border-r border-white bg-[#c8c8c8]" />;

function Tools({ items }) {
  return items.map((it, i) => {
    if (it === "|") return <Grip key={i} first={i === 0} />;
    if (it === "/") return <Sep key={i} />;
    if (it === "v") return <Arrow key={i} />;
    if (it === "d") return <Arrow key={i} dim />;
    if (it.startsWith("*")) return <Tool key={i} name={it.slice(1)} on />;
    return <Tool key={i} name={it} />;
  });
}

function Bar({ children }) {
  return (
    <div className="flex h-[39px] shrink-0 items-center gap-px border-b border-[#b4b4b4] bg-linear-to-b from-[#fafafa] to-[#efefef]">
      {children}
    </div>
  );
}

function Spin({ id, label, value, className }) {
  return (
    <div className={`${className} flex shrink-0 overflow-hidden rounded-[3px] border border-[#a8a8a8] bg-white`}>
      <input id={id} aria-label={label} defaultValue={value} className="min-w-0 flex-1 px-1 outline-none" />
      <div className="flex w-[13px] flex-col border-l border-[#b4b4b4] bg-[#f2f2f2]">
        <button type="button" aria-label={`Increase ${label}`} className="flex flex-1 items-center justify-center">
          <svg viewBox="0 0 8 4" className="h-1 w-2" aria-hidden="true"><path d="M0 4h8L4 0z" fill="#555" /></svg>
        </button>
        <button type="button" aria-label={`Decrease ${label}`} className="flex flex-1 items-center justify-center">
          <svg viewBox="0 0 8 4" className="h-1 w-2" aria-hidden="true"><path d="M0 0h8L4 4z" fill="#555" /></svg>
        </button>
      </div>
    </div>
  );
}

function Check({ id, label, checked }) {
  return (
    <span className="grid size-[14px] shrink-0">
      <input
        id={id}
        type="checkbox"
        aria-label={label}
        defaultChecked={checked}
        className="peer col-start-1 row-start-1 size-[14px] appearance-none border border-[#b8b8b8] bg-white"
      />
      <svg viewBox="0 0 14 14" className="pointer-events-none invisible col-start-1 row-start-1 size-[14px] peer-checked:visible" aria-hidden="true">
        <path d="M3.500 6.500l2.500 4L10.500 2.500" fill="none" stroke="#111" strokeWidth="2" />
      </svg>
    </span>
  );
}

/* ---------- layer tree ---------- */

const TREE = [
  { layer: "USLands", open: true, checked: true, selected: true },
  { value: "1", swatch: "bg-black" },
  { value: "10", swatch: "bg-white" },
  { layer: "USTransLines", line: true },
  { layer: "TransDist", closed: true },
  { layer: "TransitLines", open: true },
  { value: "1", swatch: "bg-black" },
  { value: "1", swatch: "bg-white" },
  { layer: "USAnnWind", open: true },
  { value: "6.5321", swatch: "bg-[#d7191c]" },
  { value: "10.0754", swatch: "bg-[#f17c4a]" },
  { value: "13.6186", swatch: "bg-[#fec980]" },
  { value: "17.1619", swatch: "bg-[#ffffbf]" },
  { value: "20.7051", swatch: "bg-[#c7e8ad]" },
  { value: "24.2484", swatch: "bg-[#80bfab]" },
  { value: "27.7916", swatch: "bg-[#2b83ba]" },
  { layer: "USslope", open: true },
  { value: "0.0000", swatch: "bg-[#d7191c]" },
  { value: "0.2533", swatch: "bg-[#fdae61]" },
  { value: "0.6227", swatch: "bg-[#ffffbf]" },
  { value: "1.6914", swatch: "bg-[#abdda4]" },
  { value: "29.0004", swatch: "bg-[#2b83ba]" },
];

function RasterGlyph({ selected }) {
  return (
    <svg viewBox="0 0 13 13" className="size-[13px]" aria-hidden="true" shapeRendering="crispEdges">
      <path d="M0 0h13v9h-4v4H0z" fill={selected ? "#6aa8e0" : "#b0c8e4"} />
      <path d="M0 0h4v4H0zM9 0h4v4H9zM4 4h5v5H4zM0 9h4v4H0z" fill={selected ? "#1c4a7c" : "#2c3e55"} />
      {!selected && <path d="M4 4h5v5H4z" fill="none" stroke="#7a93b0" />}
      {selected && <path d="M9 9h4v4H9z" fill="#1c4a7c" />}
    </svg>
  );
}

function TreeRow({ row, index }) {
  if (!row.layer) {
    return (
      <li className="flex h-[18px] items-center pl-[43px]">
        <span className={`${row.swatch} mr-[6px] size-4`} />
        <span>{row.value}</span>
      </li>
    );
  }
  const id = `layer-${index}`;
  return (
    <li className={row.selected ? "flex h-[18px] items-center bg-[#0f80dc] text-white" : "flex h-[18px] items-center text-[#808080]"}>
      <span className="flex w-[23px] items-center pl-[6px]">
        {row.open && (
          <svg viewBox="0 0 8 5" className="h-[5px] w-2" aria-hidden="true"><path d="M0 .5h8l-4 4z" fill={row.selected ? "#0b3a68" : "#555"} /></svg>
        )}
        {row.closed && (
          <svg viewBox="0 0 5 8" className="h-2 w-[9px]" aria-hidden="true"><path d="M.5 0v8l4 -4z" fill="#555" /></svg>
        )}
      </span>
      <Check id={id} checked={row.checked} />
      <span className="ml-[6px] mr-[6px] flex w-4 justify-center">
        {row.line ? <span className="h-[2px] w-4 bg-[#8c8c8c]" /> : <RasterGlyph selected={row.selected} />}
      </span>
      <label htmlFor={id} className={row.selected ? "font-bold underline" : "text-xs font-bold italic"}>{row.layer}</label>
    </li>
  );
}

const MENU = [
  ["Pro", "j", "ect"], ["", "E", "dit"], ["", "V", "iew"], ["", "L", "ayer"], ["", "S", "ettings"],
  ["", "P", "lugins"], ["Vect", "o", "r"], ["", "R", "aster"], ["", "D", "atabase"], ["", "W", "eb"],
  ["", "M", "esh"], ["MMQGIS", "", ""], ["SCP", "", ""], ["Pro", "c", "essing"], ["", "H", "elp"],
];

export default function App() {
  return (
    <div className="flex h-screen flex-col overflow-hidden bg-[#d9dfec] font-['Open_Sans','Noto_Sans',sans-serif] text-[11px] leading-4 text-black">
      <div className="flex min-h-0 flex-1 flex-col border-b-2 border-l-2 border-[#1a3570] bg-[#f0f0f0]">
        <header className="flex h-[30px] shrink-0 items-center bg-white pl-2">
          <svg viewBox="0 0 16 16" className="size-4" aria-hidden="true">
            <circle cx="7.500" cy="7.500" r="5.800" fill="none" stroke="#589632" strokeWidth="3.400" />
            <path d="M2 5A6 6 0 0 1 12 3.500" fill="none" stroke="#93b023" strokeWidth="1.500" />
            <path d="M7.500 7.500h3.500l5 5.500v3h-3.500l-5 -5z" fill="#589632" />
            <path d="M6.500 6h3v3h-3z" fill="#ee7913" />
          </svg>
          <h1 className="ml-[5px] flex-1">*Untitled Project — QGIS</h1>
          <button type="button" aria-label="Minimize" className="flex h-[30px] w-[46px] items-center justify-center">
            <svg viewBox="0 0 10 10" className="size-[10px]" aria-hidden="true"><path d="M0 5.500h10" stroke="#111" /></svg>
          </button>
          <button type="button" aria-label="Maximize" className="flex h-[30px] w-[46px] items-center justify-center">
            <svg viewBox="0 0 10 10" className="size-[10px]" aria-hidden="true"><path d="M.5 .5h9v9h-9z" fill="none" stroke="#111" /></svg>
          </button>
          <button type="button" aria-label="Close" className="flex h-[30px] w-[42px] items-center justify-center">
            <svg viewBox="0 0 11 11" className="size-[11px]" aria-hidden="true"><path d="M.5 .5l10 10M10.500 .5l-10 10" stroke="#111" /></svg>
          </button>
        </header>

        <nav aria-label="Menu bar" className="flex h-5 shrink-0 items-center gap-[15px] border-b border-[#d0d0d0] pl-[10px]">
          {MENU.map(([a, u, b]) => (
            <button key={a + u + b} type="button">
              {a}<u>{u}</u>{b}
            </button>
          ))}
        </nav>

        <Bar>
          <Tools items={["|", "new", "open", "save", "layout", "layoutManager", "style", "|", "hand", "panSel", "zoomIn", "zoomOut", "zoomFull", "zoomSel", "zoomLayer", "zoomNative", "zoomLast", "zoomNext", "mapView", "map3d", "bookmark", "bookmarks", "clock", "refresh", "|", "*identify", "table", "abacus", "gear", "sigma", "measure", "v", "*mapTips", "action", "d", "annotation", "v"]} />
        </Bar>
        <Bar>
          <Tools items={["|", "dataSource", "geopackage", "newShp", "newQuill", "chip", "/", "virtual", "/", "|", "editsMulti", "pencil", "saveEdits", "addFeature", "vertex", "d", "modify", "trash", "cut", "copy", "paste", "undo", "redo", "|", "help", "|", "addVector", "addRaster", "addMesh", "addCsv", "addQuill", "addVirtual", "addPg", "v", "addWms", "v", "addWcs", "addWfs", "v", "newShp", "v"]} />
        </Bar>
        <Bar>
          <Tools items={["|", "*magnet", "snapAdv", "*snapType"]} />
          <Spin label="Snapping tolerance" value="30.00" className="h-5 w-[91px]" />
          <div className="grid h-[22px] w-[88px] shrink-0 items-center">
            <select aria-label="Snapping units" className="col-start-1 row-start-1 h-[22px] w-full appearance-none rounded-[3px] border border-[#a8a8a8] bg-linear-to-b from-white to-[#ececec] px-1">
              <option>meters</option>
            </select>
            <svg viewBox="0 0 8 5" className="pointer-events-none col-start-1 row-start-1 mr-[7px] h-[5px] w-2 justify-self-end" aria-hidden="true"><path d="M0 0h8l-4 4.500z" fill="#555" /></svg>
          </div>
          <Tools items={["topo", "overlap", "cross", "trace", "v", "selfSnap"]} />
        </Bar>
        <Bar>
          <Tools items={["|", "select", "d", "selectExpr", "d", "deselect", "v", "selectLoc"]} />
        </Bar>

        <main className="flex min-h-0 flex-1">
          <section aria-label="Layers" className="flex w-[361px] shrink-0 flex-col">
            <div className="flex h-5 shrink-0 items-center gap-[2px] pl-1 pr-[2px]">
              <h2 className="flex-1">Layers</h2>
              <button type="button" aria-label="Float panel">
                <svg viewBox="0 0 12 12" className="size-3" aria-hidden="true"><rect x=".5" y=".5" width="11" height="11" rx="2" fill="#eee" stroke="#666" /><path d="M5.500 2.500h4v4h-4zM2.500 5.500h4v4h-4z" fill="#eee" stroke="#555" /></svg>
              </button>
              <button type="button" aria-label="Close panel">
                <svg viewBox="0 0 12 12" className="size-3" aria-hidden="true"><rect x=".5" y=".5" width="11" height="11" rx="2" fill="#eee" stroke="#666" /><path d="M3 3l6 6M9 3l-6 6" stroke="#444" strokeWidth="2" /></svg>
              </button>
            </div>
            <div className="flex h-[30px] shrink-0 items-center gap-[9px] pb-px pl-2">
              {["brush", "group", "eye", "filter", "exprFilter"].map((n) => (
                <button key={n} type="button" aria-label={n}><Icon size="size-4">{I[n]}</Icon></button>
              ))}
              <div className="-ml-[5px] -mr-[3px]"><Arrow dim /></div>
              {["expand", "collapse", "remove"].map((n) => (
                <button key={n} type="button" aria-label={n}><Icon size="size-4">{I[n]}</Icon></button>
              ))}
            </div>
            <ul className="min-h-0 flex-1 overflow-hidden border border-[#b4b4b4] bg-white">
              {TREE.map((row, i) => (
                <TreeRow key={i} row={row} index={i} />
              ))}
            </ul>
            <div className="mt-px flex h-6 shrink-0 items-start border-t border-[#b4b4b4]">
              <button type="button" className="h-5 w-[63px] rounded-b-[3px] border border-t-0 border-[#b4b4b4] bg-[#dcdcdc]">Browser</button>
              <button type="button" className="h-[22px] w-[55px] rounded-b-[3px] border border-t-0 border-l-0 border-[#b4b4b4] bg-[#f8f8f8]">Layers</button>
            </div>
          </section>
          <div className="flex w-[6px] shrink-0 items-center justify-center">
            <svg viewBox="0 0 2 18" className="h-[18px] w-[2px]" aria-hidden="true"><path d="M1 0v18" stroke="#aaa" strokeDasharray="1 2" /></svg>
          </div>
          <section aria-label="Map canvas" className="flex min-w-0 flex-1 items-center justify-center overflow-hidden border-b border-l border-[#b4b4b4] bg-white pr-[30px] pt-[9px]">
            <RasterMap />
          </section>
        </main>

        <footer className="flex h-[29px] shrink-0 items-center pl-1 pt-px">
          <label className="flex h-[22px] w-[200px] items-center rounded-[3px] border border-[#a8a8a8] bg-white px-[6px]">
            <svg viewBox="0 0 14 14" className="size-[14px]" aria-hidden="true"><circle cx="6" cy="5.500" r="4" fill="none" stroke="#999" strokeWidth="1.300" /><path d="M9 8.500l4 4.500" stroke="#999" strokeWidth="1.800" /></svg>
            <input aria-label="Locate" placeholder="Type to locate (Ctrl+K)" className="ml-[6px] min-w-0 flex-1 outline-none placeholder:text-[#808080]" />
          </label>
          <p className="ml-2 flex-1">1 legend entries removed.</p>

          <label htmlFor="coord" className="mr-1">Coordinate</label>
          <input id="coord" defaultValue="-1819872,128070" className="h-[22px] w-[107px] rounded-[3px] border border-[#a8a8a8] bg-white text-center outline-none" />
          <button type="button" aria-label="Toggle extents" className="ml-1 mr-3">
            <svg viewBox="0 0 16 16" className="size-4" fill="none" aria-hidden="true">
              <ellipse cx="5.500" cy="5" rx="3" ry="4.500" transform="rotate(-35 5.500 5)" fill="#fff" stroke="#333" strokeWidth="1.300" />
              <path d="M2.500 3.500l4 -2M4 6l4.500 -2.500M5.500 8l4 -2" stroke="#333" />
              <circle cx="10" cy="11" r="4" fill="#ddd" stroke="#333" strokeWidth="1.300" />
              <path d="M12 6l3 -4M1 9l5 3M1 13l5 -1M10 8v3h3" stroke="#333" strokeWidth="1.200" />
            </svg>
          </button>
          <label htmlFor="scale" className="mr-[3px]">Scale</label>
          <div className="flex h-[22px] w-[82px] overflow-hidden rounded-[3px] border border-[#a8a8a8] bg-white">
            <input id="scale" defaultValue="1:19621856" className="min-w-0 flex-1 -indent-[2px] outline-none" />
            <button type="button" aria-label="Scale list" className="flex w-5 items-center justify-center border-l border-[#b4b4b4] bg-[#f2f2f2]">
              <svg viewBox="0 0 8 5" className="h-[5px] w-2" aria-hidden="true"><path d="M0 0h8l-4 4.500z" fill="#555" /></svg>
            </button>
          </div>
          <button type="button" aria-label="Lock scale" className="ml-[11px] mr-1">
            <svg viewBox="0 0 12 16" className="h-4 w-3" aria-hidden="true"><path d="M2.500 8V5a3.500 3.500 0 0 1 7 0v3" fill="none" stroke="#909090" strokeWidth="1.800" /><rect y="7" width="12" height="8.500" rx="1" fill="#606060" /></svg>
          </button>
          <label htmlFor="magnifier" className="mr-1">Magnifier</label>
          <Spin id="magnifier" label="Magnifier" value="100%" className="h-5 w-[88px]" />
          <label htmlFor="rotation" className="ml-2 mr-2">Rotation</label>
          <Spin id="rotation" label="Rotation" value="0.0 °" className="h-5 w-[84px]" />
          <span className="ml-[6px] mr-[3px] flex"><Check id="render" checked /></span>
          <label htmlFor="render">Render</label>
          <button type="button" className="ml-4 flex items-center gap-1">
            <svg viewBox="0 0 16 14" className="h-[14px] w-4" fill="none" aria-hidden="true"><path d="M.5 7L3 2.500L8 .5L13 2.500L15.500 7L13 11.500L8 13.500L3 11.500z" fill="#808080" stroke="#707070" /><path d="M8 .5v13M.5 7h15M3 3.500h10M3 10.500h10M5 1.500q-2 5.500 0 11M11 1.500q2 5.500 0 11" stroke="#d4d4d4" strokeWidth=".7" /></svg>
            EPSG:5071
          </button>
          <button type="button" aria-label="Messages" className="ml-[19px]">
            <svg viewBox="0 0 16 14" className="h-[14px] w-4" aria-hidden="true"><path d="M8 .5c4.500 0 7.500 2.200 7.500 5.200c0 2 -1.200 3.600 -2.500 4.300l1 3.500l-4 -2.500c-6 .8 -9.500 -2 -9.500 -5.300c0 -3 3 -5.200 7.500 -5.200z" fill="#666" /><path d="M4 5h1.600v1.600h-1.600zM7.200 5h1.600v1.600h-1.600zM10.400 5h1.600v1.600h-1.600z" fill="#fff" /></svg>
          </button>
          <button type="button" aria-label="Plugins" className="ml-3 mr-[22px]">
            <svg viewBox="0 0 22 18" className="h-[18px] w-[22px]" aria-hidden="true"><path d="M1 4.500h5q-1 -3.500 1.500 -3.500t1.500 3.500h5v4q4 1 4.500 -1.500l-2 -1l2 -4.500q3 0 3 4q-1 6 -7.500 6.500v5.500h-13v-4.500q4 0 4 -2t-4 -2z" fill="#c4c4c4" stroke="#606060" strokeWidth="1.200" /><path d="M1.500 17L6 12h3l4 4.500" fill="#e4e4e4" stroke="#777" /></svg>
          </button>
        </footer>
      </div>
      <div className="flex h-[3px] shrink-0 pl-[49px]">
        <div className="w-[342px] bg-white" />
      </div>
    </div>
  );
}
